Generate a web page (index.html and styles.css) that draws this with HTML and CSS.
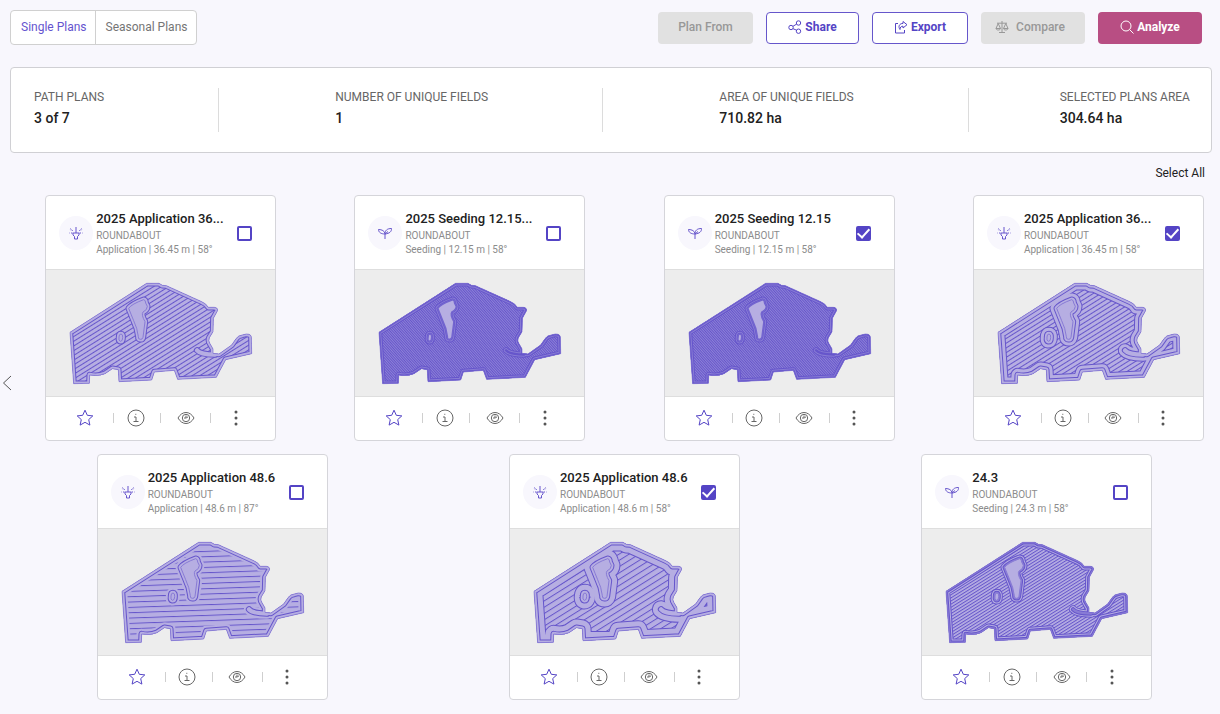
FILE: index.html
```html
<!DOCTYPE html>
<html lang="en">
<head>
<meta charset="utf-8">
<meta name="viewport" content="width=device-width, initial-scale=1">
<title>Path plans</title>
<link rel="stylesheet" href="styles.css">
</head>
<body>
<svg class="sprite" aria-hidden="true">
  <defs>
    <path id="boundary" d="M75 190 L305 43 H342 L352 49 L364 50 L470 98 Q484 104 490 115 L508 115 Q520 117 517 126 L505 148 L504 188 L493 206 Q489 216 495 224 L504 240 V253 L522 255 L560 228 L574 208 Q580 199 592 198 L604 195 Q618 195 619 204 L620 254 L542 272 L514 325 L398 331 L388 304 L328 309 L320 333 L222 338 L220 302 L202 299 L180 314 Q160 323 134 318 L133 343 L86 344 Z"/>
    <path id="island" d="M251 118 Q260 105 296 92 Q302 93 302 102 L307 112 Q307 123 294 129 Q288 137 300 158 L294 205 Q292 212 286 211 Q279 211 280 203 L275 178 Q268 160 251 118 Z"/>
    <path id="pond" d="M222 204 Q222 195 228 195 Q234 195 233 206 Q233 217 226 217 Q220 216 222 204 Z"/>
    <path id="inlet" d="M456 244 Q466 256 510 257"/>
    <g id="edges">
      <use href="#boundary"/><use href="#island"/><use href="#pond"/><use href="#inlet"/>
    </g>
    <g id="islands"><use href="#island"/><use href="#pond"/></g>
    <clipPath id="field-clip"><use href="#boundary"/></clipPath>
    <pattern id="hatch-12" width="20" height="4" patternUnits="userSpaceOnUse" patternTransform="rotate(-32)"><rect class="hatch" width="20" height="3"/></pattern>
    <pattern id="hatch-24" width="20" height="8" patternUnits="userSpaceOnUse" patternTransform="rotate(-32)"><rect class="hatch" width="20" height="3"/></pattern>
    <pattern id="hatch-36" width="20" height="12" patternUnits="userSpaceOnUse" patternTransform="rotate(-32)"><rect class="hatch" width="20" height="3"/></pattern>
    <pattern id="hatch-48" width="20" height="16" patternUnits="userSpaceOnUse" patternTransform="rotate(-32)"><rect class="hatch" width="20" height="3"/></pattern>
    <pattern id="hatch-48-flat" width="20" height="16" patternUnits="userSpaceOnUse" patternTransform="rotate(-2)"><rect class="hatch" width="20" height="3"/></pattern>
  </defs>
  <symbol id="i-spray" viewBox="0 0 16 16">
    <path d="M8 2v6M4.500 8h7M5 8v2l1.500 1.500v2.500h3v-2.500L11 10V8"/>
    <path stroke-dasharray="1 1.500" d="M5 6L1.500 2.500M11 6l3.500-3.500M4 8H1M12 8h3M3.500 5L1 4.500M12.500 5l2.500-.5"/>
  </symbol>
  <symbol id="i-seed" viewBox="0 0 16 16">
    <path d="M8 14V9M8 9C8 5.500 10 3.500 14.500 3.500c.3 3-2 5-6.500 5.500M8 8.500C7.500 6 5 4.500 1.500 4.500c0 2.800 2.500 4.500 6.500 4.500M8 9l3-2.500"/>
  </symbol>
  <symbol id="i-star" viewBox="0 0 18 18">
    <path d="M9 1.200l2.300 5.100 5.500.6-4.100 3.700 1.200 5.500L9 13.300l-4.900 2.800 1.200-5.500L1.200 6.900l5.500-.6z"/>
  </symbol>
  <symbol id="i-info" viewBox="0 0 18 18">
    <circle cx="9" cy="9" r="8"/><path d="M7 8h2v4.500M6.500 12.500h5"/><path d="M8.300 5.300h1"/>
  </symbol>
  <symbol id="i-eye" viewBox="0 0 18 18">
    <path d="M1 9c2-3.500 4.800-5.500 8-5.500S15 5.500 17 9c-2 3.500-4.800 5.500-8 5.500S3 12.500 1 9z"/>
    <circle cx="9" cy="9" r="3.700"/><path d="M9 6.500V9H7M9.300 9l1.700-1.200"/>
  </symbol>
  <symbol id="i-dots" viewBox="0 0 18 18">
    <circle cx="9" cy="3" r="1.500"/><circle cx="9" cy="9" r="1.500"/><circle cx="9" cy="15" r="1.500"/>
  </symbol>
  <symbol id="i-share" viewBox="0 0 14 14">
    <circle cx="3" cy="7.500" r="2.200"/><circle cx="10.500" cy="3" r="2.200"/><circle cx="10.500" cy="11.200" r="2.200"/><path d="M5 6.300l3.600-2.200M5 8.700l3.600 1.500"/>
  </symbol>
  <symbol id="i-export" viewBox="0 0 14 14">
    <path d="M4 3.500H1.500v9.500h9V10M9 1.500l4 3.200-4 3.300V6.200C7.200 6.200 6 7.200 6 9.500 3.800 6.500 5.500 3.400 9 3.400z"/>
  </symbol>
  <symbol id="i-scale" viewBox="0 0 14 14">
    <path d="M7 1v11.500M4 12.500h6M2 3.200h10M3.200 3.500L1 8.500h4.500zM10.800 3.500l-2.300 5H13zM1 8.500c.3 2 4.200 2 4.500 0M8.500 8.500c.3 2 4.200 2 4.500 0"/>
  </symbol>
  <symbol id="i-search" viewBox="0 0 14 14">
    <circle cx="6" cy="6" r="5"/><path d="M9.700 9.700L13.500 13.500"/>
  </symbol>
</svg>

<main class="page">
  <header class="toolbar">
    <nav class="tabs" aria-label="Plan type">
      <button class="tab tab-active" type="button">Single Plans</button>
      <button class="tab" type="button">Seasonal Plans</button>
    </nav>
    <div class="actions">
      <button class="btn btn-muted btn-plan" type="button" disabled>Plan From</button>
      <button class="btn btn-outline btn-share" type="button"><svg class="btn-icon"><use href="#i-share"/></svg>Share</button>
      <button class="btn btn-outline btn-export" type="button"><svg class="btn-icon"><use href="#i-export"/></svg>Export</button>
      <button class="btn btn-muted btn-compare" type="button" disabled><svg class="btn-icon"><use href="#i-scale"/></svg>Compare</button>
      <button class="btn btn-primary" type="button"><svg class="btn-icon"><use href="#i-search"/></svg>Analyze</button>
    </div>
  </header>

  <section class="summary" aria-label="Summary">
    <div class="stat"><span class="stat-label">PATH PLANS</span><span class="stat-value">3 of 7</span></div>
    <div class="divider"></div>
    <div class="stat"><span class="stat-label">NUMBER OF UNIQUE FIELDS</span><span class="stat-value">1</span></div>
    <div class="divider"></div>
    <div class="stat"><span class="stat-label">AREA OF UNIQUE FIELDS</span><span class="stat-value">710.82 ha</span></div>
    <div class="divider divider-last"></div>
    <div class="stat"><span class="stat-label">SELECTED PLANS AREA</span><span class="stat-value">304.64 ha</span></div>
  </section>

  <div class="select-row"><button class="select-all" type="button">Select All</button></div>

  <div class="browser">
    <button class="collapse" type="button" aria-label="Collapse"><svg viewBox="0 0 10 16"><path d="M9 1L1.500 8 9 15"/></svg></button>
    <section class="cards" aria-label="Plans">

      <article class="card">
        <header class="card-head">
          <span class="badge"><svg><use href="#i-spray"/></svg></span>
          <label class="info" for="p1"><span class="title">2025 Application 36...</span><span class="meta">ROUNDABOUT</span><span class="meta">Application | 36.45 m | 58°</span></label>
          <input class="check" type="checkbox" id="p1">
        </header>
        <svg class="map" viewBox="3 3 687 378">
          <g clip-path="url(#field-clip)">
            <rect class="field" width="693" height="384"/><rect width="693" height="384" fill="url(#hatch-36)"/>
            <use class="line w19" href="#edges"/><use class="gap w13" href="#edges"/>
          </g>
          <use class="isle" href="#islands"/><use class="rim" href="#boundary"/>
        </svg>
        <footer class="card-foot">
          <button class="tool tool-star" type="button" aria-label="Favorite"><svg><use href="#i-star"/></svg></button><i class="bar"></i>
          <button class="tool tool-info" type="button" aria-label="Details"><svg><use href="#i-info"/></svg></button><i class="bar"></i>
          <button class="tool" type="button" aria-label="Preview"><svg><use href="#i-eye"/></svg></button><i class="bar"></i>
          <button class="tool tool-more" type="button" aria-label="More"><svg><use href="#i-dots"/></svg></button>
        </footer>
      </article>

      <article class="card">
        <header class="card-head">
          <span class="badge"><svg><use href="#i-seed"/></svg></span>
          <label class="info" for="p2"><span class="title">2025 Seeding 12.15...</span><span class="meta">ROUNDABOUT</span><span class="meta">Seeding | 12.15 m | 58°</span></label>
          <input class="check" type="checkbox" id="p2">
        </header>
        <svg class="map" viewBox="3 3 687 378">
          <g clip-path="url(#field-clip)">
            <rect class="field" width="693" height="384"/><rect width="693" height="384" fill="url(#hatch-12)"/>
            <use class="line w19" href="#edges"/><use class="dense w13" href="#edges"/><use class="line w7" href="#edges"/>
          </g>
          <use class="isle-soft" href="#islands"/><use class="rim" href="#boundary"/>
        </svg>
        <footer class="card-foot">
          <button class="tool tool-star" type="button" aria-label="Favorite"><svg><use href="#i-star"/></svg></button><i class="bar"></i>
          <button class="tool tool-info" type="button" aria-label="Details"><svg><use href="#i-info"/></svg></button><i class="bar"></i>
          <button class="tool" type="button" aria-label="Preview"><svg><use href="#i-eye"/></svg></button><i class="bar"></i>
          <button class="tool tool-more" type="button" aria-label="More"><svg><use href="#i-dots"/></svg></button>
        </footer>
      </article>

      <article class="card">
        <header class="card-head">
          <span class="badge"><svg><use href="#i-seed"/></svg></span>
          <label class="info" for="p3"><span class="title">2025 Seeding 12.15</span><span class="meta">ROUNDABOUT</span><span class="meta">Seeding | 12.15 m | 58°</span></label>
          <input class="check" type="checkbox" id="p3" checked>
        </header>
        <svg class="map" viewBox="3 3 687 378">
          <g clip-path="url(#field-clip)">
            <rect class="field" width="693" height="384"/><rect width="693" height="384" fill="url(#hatch-12)"/>
            <use class="line w19" href="#edges"/><use class="dense w13" href="#edges"/><use class="line w7" href="#edges"/>
          </g>
          <use class="isle-soft" href="#islands"/><use class="rim" href="#boundary"/>
        </svg>
        <footer class="card-foot">
          <button class="tool tool-star" type="button" aria-label="Favorite"><svg><use href="#i-star"/></svg></button><i class="bar"></i>
          <button class="tool tool-info" type="button" aria-label="Details"><svg><use href="#i-info"/></svg></button><i class="bar"></i>
          <button class="tool" type="button" aria-label="Preview"><svg><use href="#i-eye"/></svg></button><i class="bar"></i>
          <button class="tool tool-more" type="button" aria-label="More"><svg><use href="#i-dots"/></svg></button>
        </footer>
      </article>

      <article class="card">
        <header class="card-head">
          <span class="badge"><svg><use href="#i-spray"/></svg></span>
          <label class="info" for="p4"><span class="title">2025 Application 36...</span><span class="meta">ROUNDABOUT</span><span class="meta">Application | 36.45 m | 58°</span></label>
          <input class="check" type="checkbox" id="p4" checked>
        </header>
        <svg class="map" viewBox="3 3 687 378">
          <g clip-path="url(#field-clip)">
            <rect class="field" width="693" height="384"/><rect width="693" height="384" fill="url(#hatch-36)"/>
            <use class="line w43" href="#edges"/><use class="gap w37" href="#edges"/>
            <use class="line w19" href="#edges"/><use class="gap w13" href="#edges"/>
          </g>
          <use class="isle" href="#islands"/><use class="rim" href="#boundary"/>
        </svg>
        <footer class="card-foot">
          <button class="tool tool-star" type="button" aria-label="Favorite"><svg><use href="#i-star"/></svg></button><i class="bar"></i>
          <button class="tool tool-info" type="button" aria-label="Details"><svg><use href="#i-info"/></svg></button><i class="bar"></i>
          <button class="tool" type="button" aria-label="Preview"><svg><use href="#i-eye"/></svg></button><i class="bar"></i>
          <button class="tool tool-more" type="button" aria-label="More"><svg><use href="#i-dots"/></svg></button>
        </footer>
      </article>

      <article class="card">
        <header class="card-head">
          <span class="badge"><svg><use href="#i-spray"/></svg></span>
          <label class="info" for="p5"><span class="title">2025 Application 48.6</span><span class="meta">ROUNDABOUT</span><span class="meta">Application | 48.6 m | 87°</span></label>
          <input class="check" type="checkbox" id="p5">
        </header>
        <svg class="map" viewBox="3 3 687 378">
          <g clip-path="url(#field-clip)">
            <rect class="field" width="693" height="384"/><rect width="693" height="384" fill="url(#hatch-48-flat)"/>
            <use class="gap w31" href="#edges"/><use class="line w19" href="#edges"/><use class="gap w13" href="#edges"/>
          </g>
          <use class="isle" href="#islands"/><use class="rim" href="#boundary"/>
        </svg>
        <footer class="card-foot">
          <button class="tool tool-star" type="button" aria-label="Favorite"><svg><use href="#i-star"/></svg></button><i class="bar"></i>
          <button class="tool tool-info" type="button" aria-label="Details"><svg><use href="#i-info"/></svg></button><i class="bar"></i>
          <button class="tool" type="button" aria-label="Preview"><svg><use href="#i-eye"/></svg></button><i class="bar"></i>
          <button class="tool tool-more" type="button" aria-label="More"><svg><use href="#i-dots"/></svg></button>
        </footer>
      </article>

      <article class="card">
        <header class="card-head">
          <span class="badge"><svg><use href="#i-spray"/></svg></span>
          <label class="info" for="p6"><span class="title">2025 Application 48.6</span><span class="meta">ROUNDABOUT</span><span class="meta">Application | 48.6 m | 58°</span></label>
          <input class="check" type="checkbox" id="p6" checked>
        </header>
        <svg class="map" viewBox="3 3 687 378">
          <g clip-path="url(#field-clip)">
            <rect class="field" width="693" height="384"/><rect width="693" height="384" fill="url(#hatch-48)"/>
            <use class="line w55" href="#edges"/><use class="gap w49" href="#edges"/>
            <use class="line w19" href="#edges"/><use class="gap w13" href="#edges"/>
          </g>
          <use class="isle" href="#islands"/><use class="rim" href="#boundary"/>
        </svg>
        <footer class="card-foot">
          <button class="tool tool-star" type="button" aria-label="Favorite"><svg><use href="#i-star"/></svg></button><i class="bar"></i>
          <button class="tool tool-info" type="button" aria-label="Details"><svg><use href="#i-info"/></svg></button><i class="bar"></i>
          <button class="tool" type="button" aria-label="Preview"><svg><use href="#i-eye"/></svg></button><i class="bar"></i>
          <button class="tool tool-more" type="button" aria-label="More"><svg><use href="#i-dots"/></svg></button>
        </footer>
      </article>

      <article class="card">
        <header class="card-head">
          <span class="badge"><svg><use href="#i-seed"/></svg></span>
          <label class="info" for="p7"><span class="title">24.3</span><span class="meta">ROUNDABOUT</span><span class="meta">Seeding | 24.3 m | 58°</span></label>
          <input class="check" type="checkbox" id="p7">
        </header>
        <svg class="map" viewBox="3 3 687 378">
          <g clip-path="url(#field-clip)">
            <rect class="field" width="693" height="384"/><rect width="693" height="384" fill="url(#hatch-24)"/>
            <use class="line w25" href="#edges"/><use class="gap w19" href="#edges"/>
            <use class="line w13" href="#edges"/><use class="dense w7" href="#edges"/>
          </g>
          <use class="isle" href="#islands"/><use class="rim" href="#boundary"/>
        </svg>
        <footer class="card-foot">
          <button class="tool tool-star" type="button" aria-label="Favorite"><svg><use href="#i-star"/></svg></button><i class="bar"></i>
          <button class="tool tool-info" type="button" aria-label="Details"><svg><use href="#i-info"/></svg></button><i class="bar"></i>
          <button class="tool" type="button" aria-label="Preview"><svg><use href="#i-eye"/></svg></button><i class="bar"></i>
          <button class="tool tool-more" type="button" aria-label="More"><svg><use href="#i-dots"/></svg></button>
        </footer>
      </article>
    </section>
  </div>
</main>
</body>
</html>
```
FILE: styles.css
```css
* { box-sizing: border-box; }
body {
  margin: 0;
  background: #f8f7fd;
  color: #212121;
  font-family: Roboto, "Liberation Sans", sans-serif;
  font-size: 12px;
}
button { font: inherit; color: inherit; background: none; border: 0; padding: 0; cursor: pointer; }
svg { display: block; }
.sprite { position: absolute; width: 0; height: 0; }

.page { padding: 10px 8px 14px 10px; }
.toolbar { display: flex; justify-content: space-between; align-items: center; padding-right: 10px; }
.tabs { display: flex; height: 35px; background: #fff; border: 1px solid #d0d0d0; border-radius: 4px; }
.tab { padding: 0 9px 2px 10px; color: #757575; }
.tab-active { color: #6554cf; border-right: 1px solid #d0d0d0; padding-right: 8px; }
.actions { display: flex; gap: 13px; }
.btn {
  display: flex; align-items: center; justify-content: center; gap: 3px;
  height: 32px; padding-bottom: 2px; border: 1px solid transparent; border-radius: 4px; font-weight: 500;
}
.btn-icon { width: 14px; height: 14px; fill: none; stroke: currentColor; stroke-width: 1; }
.btn-muted { background: #e1e1e1; color: #989898; }
.btn-outline { background: #fff; border-color: #6656cb; color: #5444c5; font-weight: 700; }
.btn-plan { width: 95px; }
.btn-share { width: 93px; }
.btn-export { width: 96px; }
.btn-compare { width: 104px; gap: 7px; padding-right: 6px; }
.btn-primary { width: 104px; background: #b84e83; color: #fff; font-weight: 700; }

.summary {
  display: flex; justify-content: space-between; align-items: center;
  height: 86px; margin-top: 22px; padding: 0 21px 0 23px;
  background: #fff; border: 1px solid #d0d0d4; border-radius: 4px;
}
.stat { display: flex; flex-direction: column; margin-right: 23px; padding-bottom: 2px; }
.stat:last-child { margin-right: 0; }
.stat-label { line-height: 18px; color: #666; }
.stat-value { line-height: 24px; font-size: 14px; font-weight: 500; }
.divider { width: 1px; height: 44px; margin-right: 25px; background: #dcdcdc; }
.divider-last { margin-right: 0; }

.select-row { display: flex; justify-content: flex-end; padding: 11px 7px 0 0; }
.select-all { line-height: 18px; }

.browser { display: flex; align-items: flex-start; margin: 13px -8px 0 -10px; }
.collapse { flex: none; width: 29px; padding-left: 2px; margin-top: 180px; }
.collapse svg { width: 10px; height: 16px; fill: none; stroke: #555; stroke-width: 1; }
.cards { flex: 1; display: flex; flex-wrap: wrap; justify-content: space-around; gap: 13px 46px; }

.card { width: 231px; background: #fff; border: 1px solid #d5d5da; border-radius: 4px; overflow: hidden; }
.card-head { display: flex; align-items: center; height: 74px; padding: 0 23px 0 13px; }
.badge {
  display: grid; place-items: center; flex: none; width: 34px; height: 34px; margin-right: 3px;
  border-radius: 50%; background: #f8f7fd;
}
.badge svg { width: 16px; height: 16px; fill: none; stroke: #6655cc; stroke-width: 1; }
.info { flex: 1; min-width: 0; }
.info span { display: block; white-space: nowrap; }
.title { font-size: 13px; line-height: 20px; font-weight: 500; }
.meta { font-size: 10px; line-height: 14px; color: #8c8c8c; }
.check {
  appearance: none; flex: none; display: grid; place-items: center;
  width: 15px; height: 15px; margin: 0; border: 2px solid #5444c5; border-radius: 2px; background: #fff;
}
.check:checked { background: #5444c5; }
.check:checked::after {
  content: ""; width: 5px; height: 10px; margin-top: -3px;
  border: solid #fff; border-width: 0 2px 2px 0; transform: rotate(42deg);
}

.map { width: 100%; height: auto; background: #ededed; outline: 1px solid #dedede; }
.hatch { fill: #6656cb; }
.field { fill: #b6aee2; }
.line, .gap, .dense { fill: none; stroke-linejoin: round; stroke-linecap: round; }
.line { stroke: #6656cb; }
.gap { stroke: #b6aee2; }
.dense { stroke: #887bd5; }
.w7 { stroke-width: 7; }
.w13 { stroke-width: 13; }
.w19 { stroke-width: 19; }
.w25 { stroke-width: 25; }
.w31 { stroke-width: 31; }
.w37 { stroke-width: 37; }
.w43 { stroke-width: 43; }
.w49 { stroke-width: 49; }
.w55 { stroke-width: 55; }
.isle { fill: #b6aee2; stroke: #887bd5; stroke-width: 3; }
.isle-soft { fill: #b6aee2; stroke: #7365cf; stroke-width: 5; }
.rim { fill: none; stroke: #7d70d2; stroke-width: 2; stroke-linejoin: round; }

.card-foot { display: flex; align-items: center; height: 44px; padding-left: 12px; }
.tool { display: grid; place-items: center; width: 49px; height: 32px; }
.tool svg { width: 18px; height: 18px; fill: none; stroke: #666; stroke-width: 1; }
.tool-star { width: 55px; padding-right: 1px; }
.tool-star svg { stroke: #5444c5; }
.tool-info { width: 46px; padding-right: 3px; }
.tool-more svg { fill: #555; stroke: none; }
.bar { width: 1px; height: 10px; background: #cfcfcf; }
```
